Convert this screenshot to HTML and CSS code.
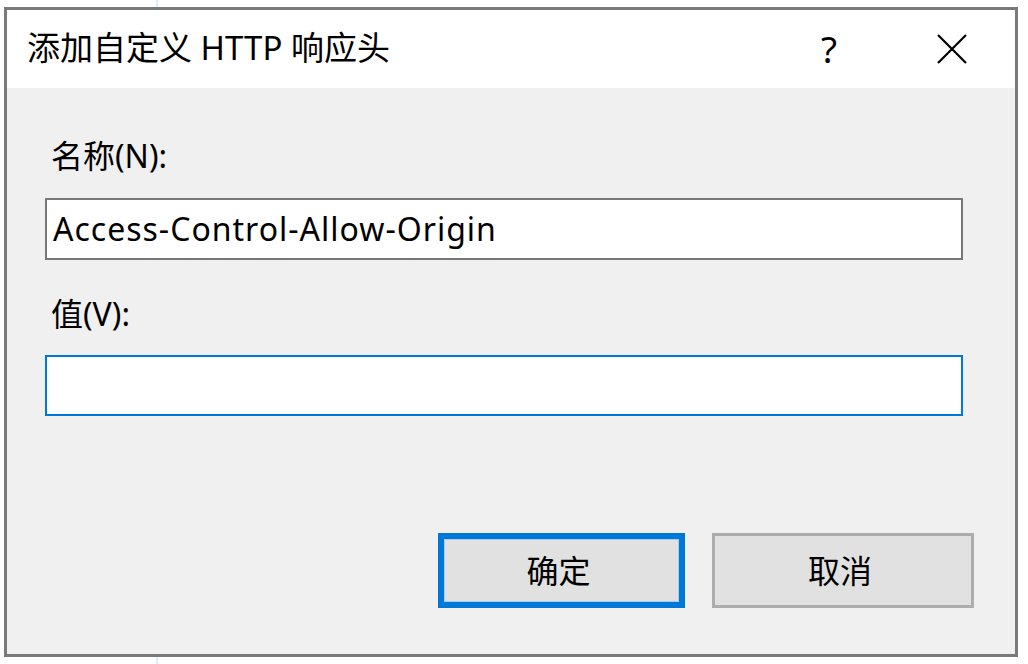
FILE: index.html
```html
<!DOCTYPE html>
<html lang="zh-CN">
<head>
<meta charset="utf-8">
<title>添加自定义 HTTP 响应头</title>
<link rel="stylesheet" href="styles.css">
</head>
<body>
<div class="dialog">
  <div class="titlebar">
    <div class="title">添加自定义 HTTP 响应头</div>
    <div class="caption-btn help">?</div>
    <div class="caption-btn close">
      <svg width="30" height="30" viewBox="0 0 30 30"><path d="M1 1 L29 29 M29 1 L1 29" stroke="#000" stroke-width="2.2" fill="none"/></svg>
    </div>
  </div>
  <div class="body">
    <div class="label">名称(N):</div>
    <div class="field">Access-Control-Allow-Origin</div>
    <div class="label label-2">值(V):</div>
    <div class="field field-focus"></div>
    <div class="actions">
      <div class="btn btn-default">确定</div>
      <div class="btn btn-cancel">取消</div>
    </div>
  </div>
</div>
</body>
</html>
```
FILE: styles.css
```css
html, body {
  margin: 0;
  padding: 0;
}
body {
  width: 1028px;
  height: 664px;
  overflow: hidden;
  background: linear-gradient(to right, #fff 156px, #e2ebfa 156px, #e2ebfa 158px, #fff 158px);
  font-family: "Noto Sans", "Noto Sans CJK SC", sans-serif;
  color: #000;
}
.dialog {
  box-sizing: border-box;
  margin: 7px 0 0 4px;
  width: 1014px;
  height: 650px;
  border: 3px solid #7a7a7a;
  display: flex;
  flex-direction: column;
  background: #f0f0f0;
}
.titlebar {
  height: 78px;
  background: #fff;
  display: flex;
  align-items: center;
}
.title {
  flex: 1;
  padding-left: 20px;
  font-size: 33px;
  line-height: 40px;
  white-space: nowrap;
  position: relative;
  top: -1px;
}
.caption-btn {
  height: 78px;
  display: flex;
  align-items: center;
  justify-content: center;
}
.help {
  width: 120px;
  font-size: 37px;
  line-height: 40px;
}
.close {
  width: 126px;
}
.body {
  flex: 1;
  display: flex;
  flex-direction: column;
  padding: 48px 41px 46px 38px;
}
.label {
  font-size: 32px;
  line-height: 40px;
  padding-left: 6px;
  margin-bottom: 22px;
}
.label-2 {
  margin-bottom: 21px;
}
.field {
  box-sizing: border-box;
  width: 918px;
  height: 62px;
  border: 2px solid #777;
  background: #fff;
  padding-left: 6px;
  font-size: 32px;
  letter-spacing: 1px;
  line-height: 58px;
  margin-bottom: 34px;
  white-space: nowrap;
}
.field-focus {
  height: 61px;
  border-color: #0078d7;
  margin-bottom: 0;
}
.actions {
  margin-top: auto;
  display: flex;
  justify-content: flex-end;
  gap: 27px;
}
.btn {
  box-sizing: border-box;
  height: 75px;
  background: #e1e1e1;
  display: flex;
  align-items: center;
  justify-content: center;
  font-size: 32px;
  line-height: 40px;
}
.btn-default {
  width: 247px;
  border: 6px solid #0078d7;
  box-shadow: inset 0 0 0 1px #a9cdf0;
  padding-right: 6px;
}
.btn-cancel {
  width: 262px;
  border: 3px solid #adadad;
  padding-right: 6px;
}
```
